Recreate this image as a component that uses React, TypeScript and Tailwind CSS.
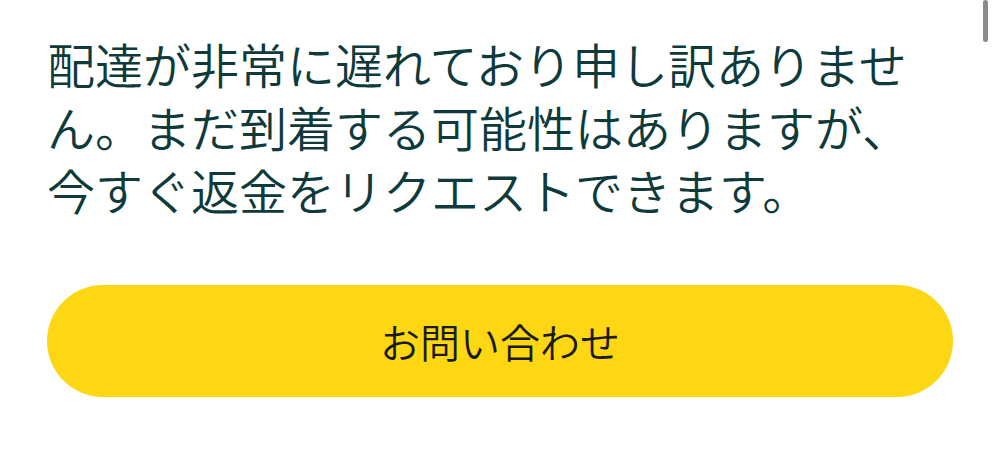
export default function App() {
  return (
    <div
      className="relative w-[999px] h-[452px] bg-white overflow-hidden"
      style={{ fontFamily: '"Noto Sans CJK JP", "Noto Sans", sans-serif' }}
    >
      {/* scrollbar thumb */}
      <div className="absolute right-[11px] top-0 w-[5px] h-[42px] rounded-full bg-[#8a8a8a]" />

      <div className="pl-[47px] pr-[46px] pt-[32px]">
        <p className="text-[48px] leading-[63px] font-[350] text-[#0e3a3b] w-[880px]">
          配達が非常に遅れており申し訳ありません。まだ到着する可能性はありますが、今すぐ返金をリクエストできます。
        </p>

        <button className="mt-[64px] w-[906px] h-[112px] rounded-full bg-[#fdd713] text-[40px] font-[350] text-[#1a1a1a] flex items-center justify-center">
          お問い合わせ
        </button>
      </div>
    </div>
  );
}
